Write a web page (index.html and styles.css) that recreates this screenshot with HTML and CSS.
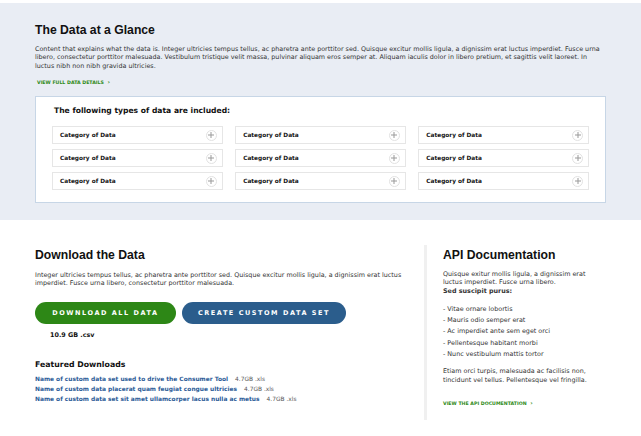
FILE: index.html
```html
<!DOCTYPE html>
<html>
<head>
<meta charset="utf-8">
<link rel="stylesheet" href="styles.css">
</head>
<body>
<section class="glance">
  <h1 class="h1">The Data at a Glance</h1>
  <p class="para glance-text">Content that explains what the data is. Integer ultricies tempus tellus, ac pharetra ante porttitor sed. Quisque excitur mollis ligula, a dignissim erat luctus imperdiet. Fusce urna libero, consectetur porttitor malesuada. Vestibulum tristique velit massa, pulvinar aliquam eros semper at. Aliquam iaculis dolor in libero pretium, et sagittis velit laoreet. In luctus nibh non nibh gravida ultricies.</p>
  <a class="more glance-more" href="#">VIEW FULL DATA DETAILS <span class="chev">&#8250;</span></a>
  <div class="types">
    <h2 class="types-title">The following types of data are included:</h2>
    <div class="grid">
      <div class="cat"><span>Category of Data</span><i class="plus"></i></div>
      <div class="cat"><span>Category of Data</span><i class="plus"></i></div>
      <div class="cat"><span>Category of Data</span><i class="plus"></i></div>
      <div class="cat"><span>Category of Data</span><i class="plus"></i></div>
      <div class="cat"><span>Category of Data</span><i class="plus"></i></div>
      <div class="cat"><span>Category of Data</span><i class="plus"></i></div>
      <div class="cat"><span>Category of Data</span><i class="plus"></i></div>
      <div class="cat"><span>Category of Data</span><i class="plus"></i></div>
      <div class="cat"><span>Category of Data</span><i class="plus"></i></div>
    </div>
  </div>
</section>
<section class="lower">
  <div class="download">
    <h1 class="h1">Download the Data</h1>
    <p class="para dl-text">Integer ultricies tempus tellus, ac pharetra ante porttitor sed. Quisque excitur mollis ligula, a dignissim erat luctus imperdiet. Fusce urna libero, consectetur porttitor malesuada.</p>
    <div class="buttons">
      <div class="btn-col">
        <a class="btn green" href="#">DOWNLOAD ALL DATA</a>
        <div class="size">10.9 GB .csv</div>
      </div>
      <a class="btn blue" href="#">CREATE CUSTOM DATA SET</a>
    </div>
    <h3 class="feat-title">Featured Downloads</h3>
    <ul class="feat">
      <li><a href="#">Name of custom data set used to drive the Consumer Tool</a><span class="fsize">4.7GB .xls</span></li>
      <li><a href="#">Name of custom data placerat quam feugiat congue ultricies</a><span class="fsize">4.7GB .xls</span></li>
      <li><a href="#">Name of custom data set sit amet ullamcorper lacus nulla ac metus</a><span class="fsize">4.7GB .xls</span></li>
    </ul>
  </div>
  <div class="api">
    <h1 class="h1">API Documentation</h1>
    <p class="para api-text first">Quisque exitur mollis ligula, a dignissim erat luctus imperdiet. Fusce urna libero.<br><b>Sed suscipit purus:</b></p>
    <ul class="api-list">
      <li>- Vitae ornare lobortis</li>
      <li>- Mauris odio semper erat</li>
      <li>- Ac imperdiet ante sem eget orci</li>
      <li>- Pellentesque habitant morbi</li>
      <li>- Nunc vestibulum mattis tortor</li>
    </ul>
    <p class="para api-text last">Etiam orci turpis, malesuada ac facilisis non, tincidunt vel tellus. Pellentesque vel fringilla.</p>
    <a class="more api-more" href="#">VIEW THE API DOCUMENTATION <span class="chev">&#8250;</span></a>
  </div>
</section>
</body>
</html>
```
FILE: styles.css
```css
* { box-sizing: border-box; }
html, body { margin: 0; padding: 0; background: #fff; }
body {
  font-family: "DejaVu Sans", "Noto Sans", sans-serif;
  color: #222;
  width: 641px;
  height: 436px;
  overflow: hidden;
  padding-top: 3px;
}
a { text-decoration: none; }
.glance {
  background: #e9edf4;
  height: 217px;
  padding: 19px 35px 0 35px;
}
.h1 {
  margin: 0;
  font-family: "Liberation Sans", Arial, sans-serif;
  font-size: 12.2px;
  font-weight: bold;
  color: #111;
  line-height: 16px;
}
.para {
  margin: 0;
  font-size: 6.4px;
  line-height: 8.7px;
  color: #333;
}
.glance-text { margin-top: 6.5px; }
.more {
  display: block;
  color: #2e8a16;
  font-size: 4.7px;
  line-height: 6px;
  font-weight: bold;
}
.glance-more { margin-top: 8.3px; margin-left: 2px; }
.chev { font-size: 6px; margin-left: 2px; }
.types {
  margin-top: 10px;
  height: 107px;
  background: #fff;
  border: 1px solid #c7d6e6;
  padding: 9px 16px 0 16px;
}
.types-title {
  margin: 0 0 10.5px 2px;
  font-size: 7.6px;
  font-weight: bold;
  color: #111;
  line-height: 10px;
}
.grid {
  display: grid;
  grid-template-columns: repeat(3, 1fr);
  column-gap: 12.5px;
  row-gap: 5px;
}
.cat {
  height: 18px;
  border: 1px solid #e6e6e6;
  display: flex;
  align-items: center;
  justify-content: space-between;
  padding: 0 5px 0 7px;
  font-size: 5.8px;
  font-weight: bold;
  color: #111;
}
.plus {
  width: 11px;
  height: 11px;
  border: 1px solid #e2e2e2;
  border-radius: 50%;
  position: relative;
}
.plus::before, .plus::after {
  content: "";
  position: absolute;
  background: #9a9a9a;
  left: 50%;
  top: 50%;
  transform: translate(-50%, -50%);
}
.plus::before { width: 6px; height: 1px; }
.plus::after { width: 1px; height: 6px; }

.lower {
  display: flex;
  padding: 25px 0 0 35px;
}
.download { width: 375px; padding-top: 2px; }
.dl-text { margin-top: 7.5px; }
.buttons {
  display: flex;
  gap: 6px;
  margin-top: 14.5px;
  align-items: flex-start;
}
.btn {
  display: flex;
  align-items: center;
  justify-content: center;
  height: 22px;
  border-radius: 11px;
  color: #fff;
  font-size: 6.5px;
  font-weight: bold;
  letter-spacing: 1.55px;
}
.green { background: #2d8716; width: 141px; }
.blue { background: #2b5d8c; width: 164px; }
.size {
  font-size: 6.4px;
  line-height: 8px;
  font-weight: bold;
  color: #111;
  margin: 6.7px 0 0 15px;
}
.feat-title {
  margin: 19.8px 0 0 0;
  font-size: 7.8px;
  font-weight: bold;
  color: #111;
  line-height: 11px;
}
.feat {
  list-style: none;
  margin: 5.6px 0 0 0;
  padding: 0;
  font-size: 5.9px;
  line-height: 9.8px;
}
.feat a { color: #2a5a96; font-weight: bold; }
.fsize { color: #555; margin-left: 7px; }

.api {
  margin-left: 14px;
  border-left: 3px solid #f0f0f0;
  padding: 2px 0 13px 16px;
  width: 195px;
  align-self: flex-start;
}
.api-text { width: 150px; }
.api-text.first { margin-top: 6.7px; }
.api-text.last { margin-top: 6.6px; }
.api-list {
  list-style: none;
  margin: 7.8px 0 0 0;
  padding: 0;
  font-size: 6.4px;
  line-height: 11.4px;
  color: #333;
}
.api-more { margin-top: 15.8px; }
```
